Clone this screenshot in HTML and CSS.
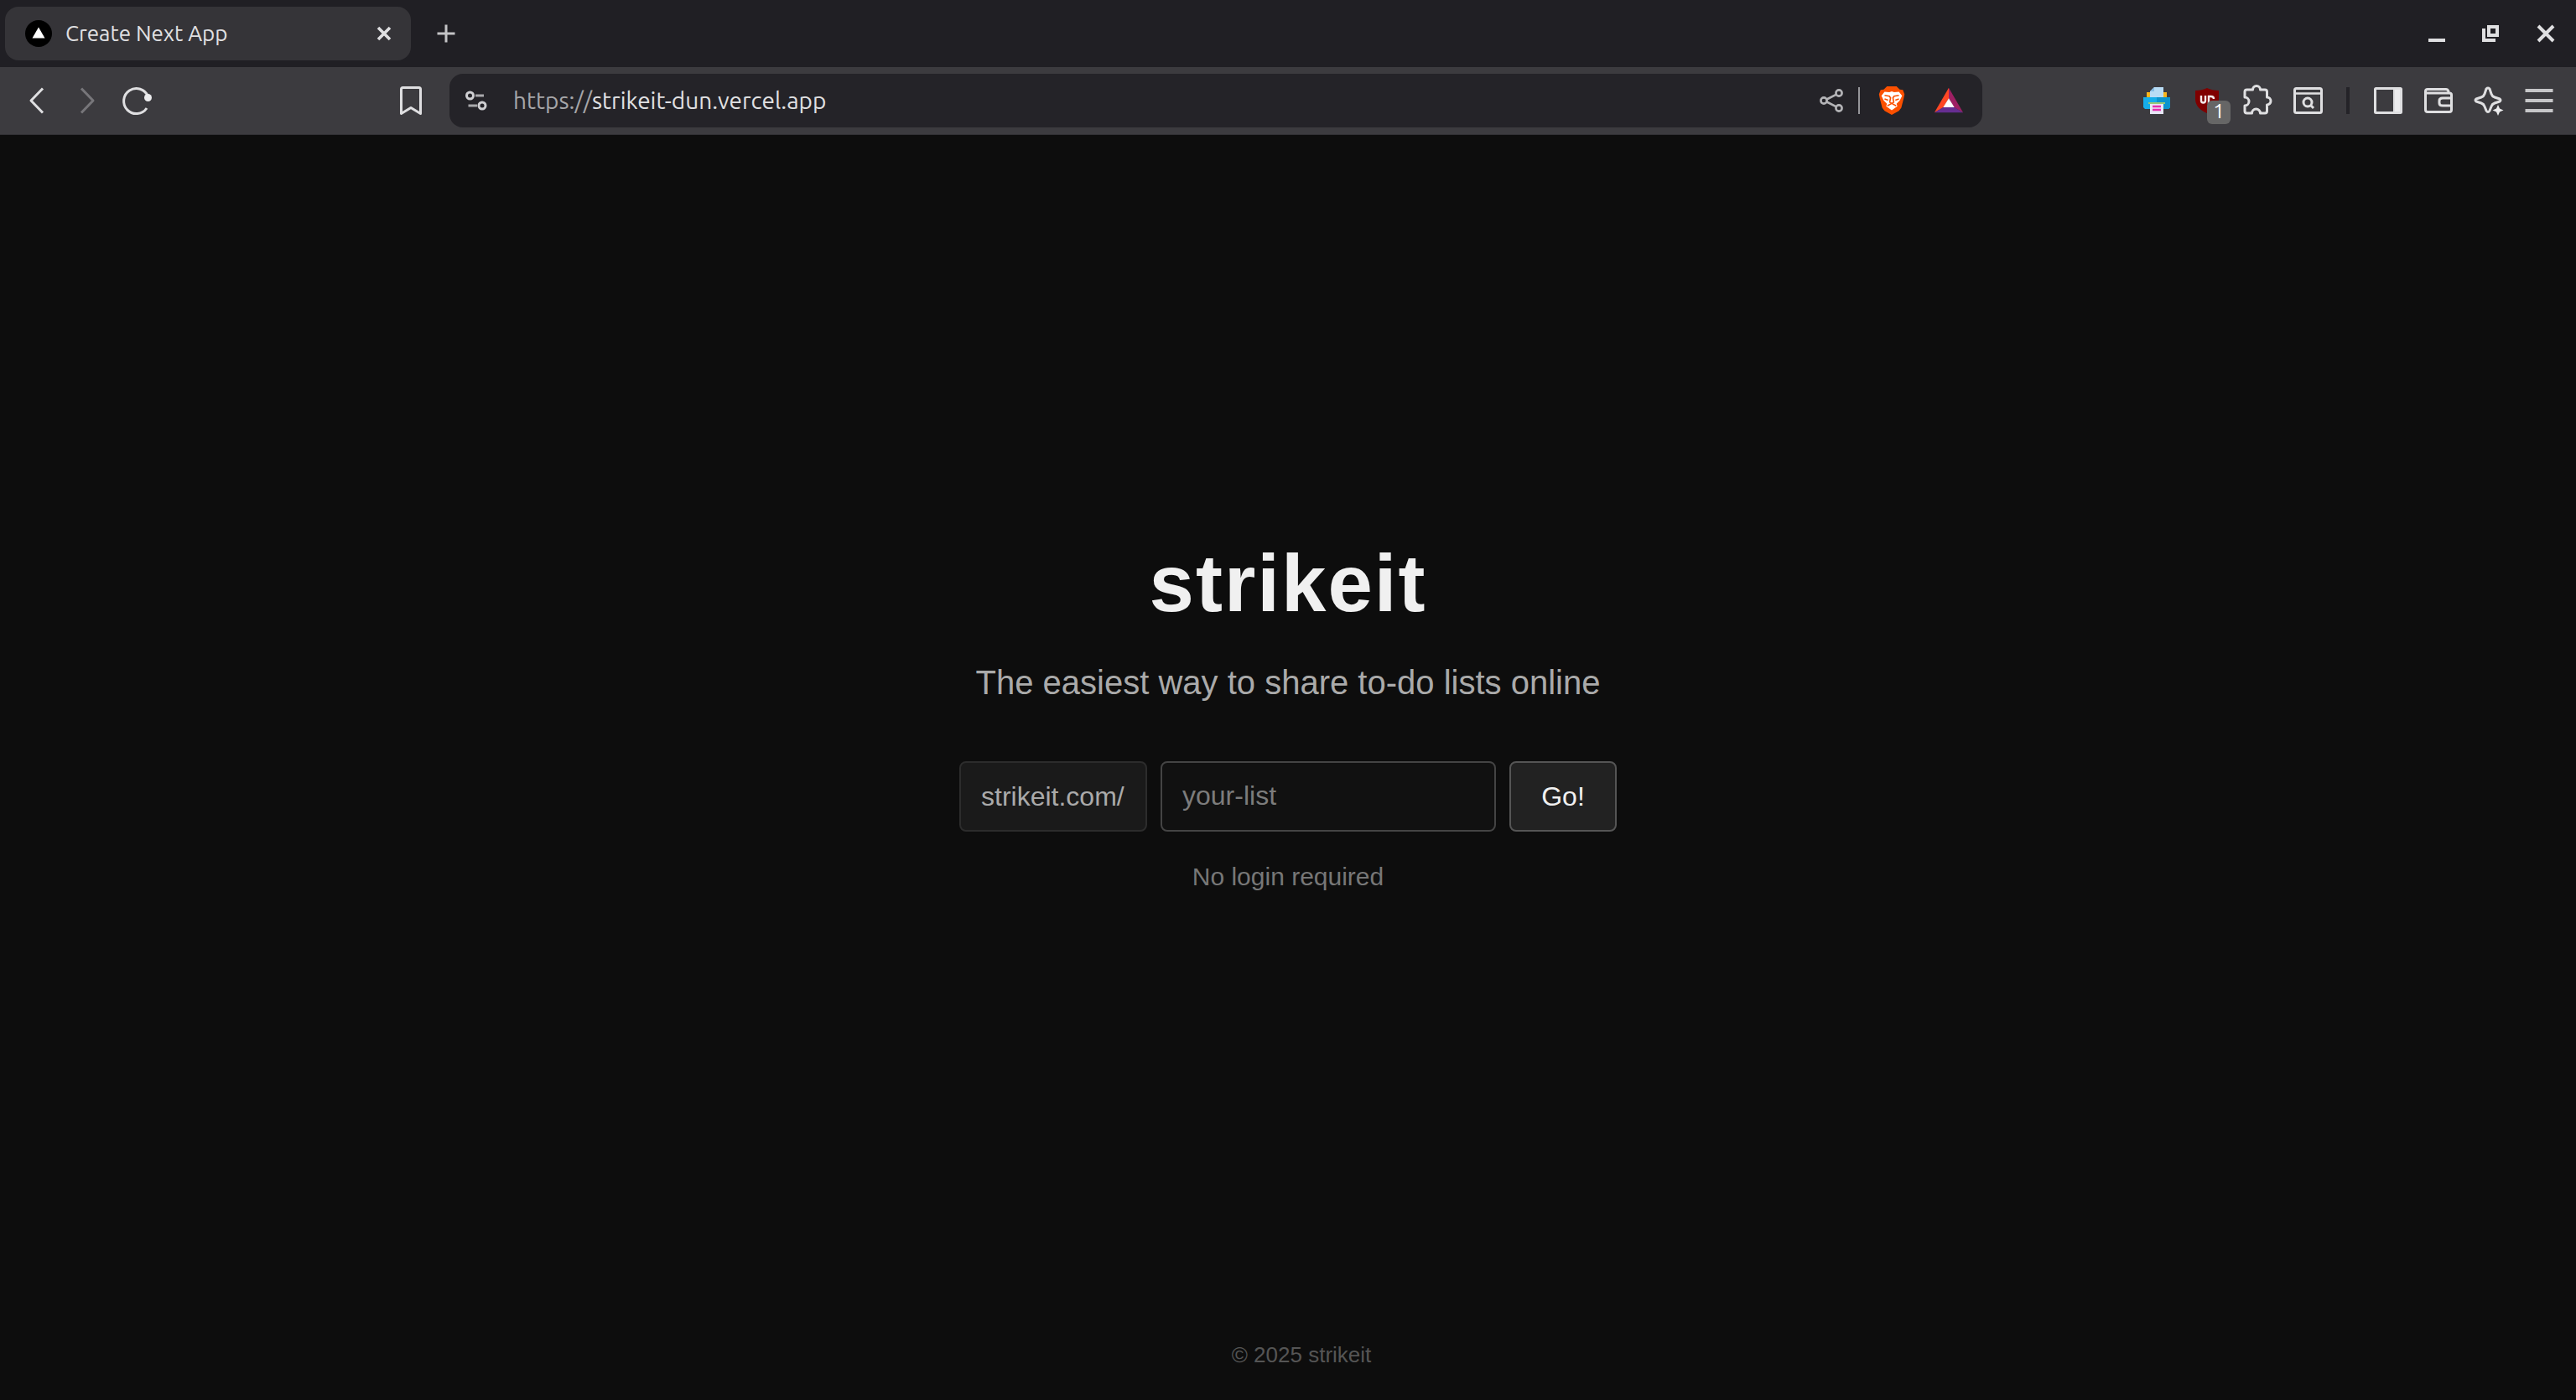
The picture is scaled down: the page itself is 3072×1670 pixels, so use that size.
FILE: index.html
```html
<!DOCTYPE html>
<html lang="en">
<head>
<meta charset="utf-8">
<title>Create Next App</title>
<link rel="stylesheet" href="styles.css">
</head>
<body>
<div class="window">
  <header class="chrome">
    <div class="tabstrip">
      <div class="tab">
        <svg class="favicon" viewBox="0 0 32 32" aria-hidden="true"><circle cx="16" cy="16" r="16" fill="#000"/><path d="M16 8.500L23.500 21.500H8.500Z" fill="#fff"/></svg>
        <span class="tab-title">Create Next App</span>
        <button class="tab-close" aria-label="Close tab"><svg class="icon" viewBox="0 0 40 40"><path d="M13 13L27 27M27 13L13 27" stroke-width="3.600"/></svg></button>
      </div>
      <button class="new-tab" aria-label="New tab"><svg class="icon" viewBox="0 0 40 40"><path d="M20 9.500V30.500M9.500 20H30.500" stroke="#c4c4c6" stroke-width="3"/></svg></button>
      <div class="window-controls">
        <button class="window-button" aria-label="Minimize"><svg class="icon" viewBox="0 0 40 40"><path d="M12 28H32" stroke-width="4"/></svg></button>
        <button class="window-button" aria-label="Restore"><svg class="icon" viewBox="0 0 40 40"><path d="M18 12H28V22H18Z" stroke-width="4"/><path d="M12 14V28H26" stroke-width="4"/></svg></button>
        <button class="window-button" aria-label="Close"><svg class="icon" viewBox="0 0 40 40"><path d="M11 11L29 29M29 11L11 29" stroke-width="4"/></svg></button>
      </div>
    </div>
    <div class="toolbar">
      <nav class="nav">
        <button class="tool" aria-label="Back"><svg class="icon round" viewBox="0 0 40 40"><path d="M27 5.500L13 20L27 34.500" stroke-width="3"/></svg></button>
        <button class="tool" aria-label="Forward" disabled><svg class="icon round" viewBox="0 0 40 40"><path d="M13 5.500L27 20L13 34.500" stroke="#77767a" stroke-width="3"/></svg></button>
        <button class="tool" aria-label="Reload"><svg class="icon round" viewBox="0 0 40 40"><path d="M31 29A15 15 0 1 1 32.500 15" stroke-width="3"/><circle cx="32.500" cy="16.500" r="4.500" fill="#ececee" stroke="none"/></svg></button>
        <button class="tool bookmark" aria-label="Bookmark"><svg class="icon round" viewBox="0 0 40 40"><path d="M10.500 4.500H29.500Q31.500 4.500 31.500 6.500V35.500L20 28.500L8.500 35.500V6.500Q8.500 4.500 10.500 4.500Z" stroke-width="3"/></svg></button>
      </nav>
      <div class="address">
        <button class="site-info" aria-label="Site information"><svg class="icon" viewBox="0 0 40 40"><g stroke="#a9a9ac" stroke-width="3"><circle cx="12.500" cy="14" r="4" stroke="#cfcfd2"/><path d="M19 14H29M10.500 26H21"/><circle cx="27" cy="26" r="4" stroke="#cfcfd2"/></g></svg></button>
        <div class="url"><span class="scheme">https://</span>strikeit-dun.vercel.app</div>
        <button class="tool share" aria-label="Share"><svg class="icon" viewBox="0 0 40 40"><g stroke="#b4b4b7" stroke-width="2.600"><circle cx="9" cy="20" r="3.600"/><circle cx="27" cy="11" r="3.600"/><circle cx="27" cy="29" r="3.600"/><path d="M12.500 18.500L23.500 12.800M12.500 21.500L23.500 27.200"/></g></svg></button>
        <span class="address-divider"></span>
        <button class="tool shield" aria-label="Brave Shields"><svg class="icon fill" viewBox="0 0 40 40"><path d="M14 2H26L30 6L34 6.500L36 12L35 17L32 29L29 33L20 38L11 33L8 29L5 17L4 12L6 6.500L10 6Z" fill="#fb5000"/><path d="M11 9L17 9.500L20 8.500L23 9.500L29 9L33 14L30 20L26 24L27 27L20 32L13 27L14 24L10 20L7 14Z" fill="#fff"/><path d="M11 13.500L17 14.500L18.500 16.500L17.500 22L20 23.500L22.500 22L21.500 16.500L23 14.500L29 13.500M14.500 26.500L20 23.500L25.500 26.500M11 18L15.500 19.500M29 18L24.500 19.500" fill="none" stroke="#fb5000" stroke-width="1.700"/></svg></button>
        <button class="tool rewards" aria-label="Brave Rewards"><svg class="icon fill" viewBox="0 0 40 40"><path d="M20 4L2 35L13.500 28.500L20 17Z" fill="#ff4724"/><path d="M20 4L38 35L26.500 28.500L20 17Z" fill="#9e1f63"/><path d="M2 35H38L27 28.500H13Z" fill="#662d91"/><path d="M20 17L27 28.500H13Z" fill="#fff"/></svg></button>
      </div>
      <div class="actions">
        <button class="tool" aria-label="Print"><svg class="icon fill" viewBox="0 0 40 40"><path d="M8 10H32V18H8Z" fill="#f8b51c"/><path d="M12 17V9L17 4H28V17Z" fill="#b8dcf5"/><path d="M12 9L17 4V9Z" fill="#86bde6"/><path d="M4 16H36V28L34 30H6L4 28Z" fill="#16aeea"/><path d="M20 16H36V28L34 30H20Z" fill="#0a94ce"/><path d="M10 22H30V24H10Z" fill="#96c878"/><path d="M12 24H28V36H12Z" fill="#e7e7f6"/><path d="M15 27H25M15 31H25" stroke="#e62daf" stroke-width="2.400"/></svg></button>
        <button class="tool ublock" aria-label="uBlock Origin, 1 blocked"><svg class="icon fill" viewBox="0 0 40 40"><path d="M20 5Q26 8 34 8V18Q34 29 20 35Q6 29 6 18V8Q14 8 20 5Z" fill="#800000"/><path d="M13 14V20Q13 22.500 15.500 22.500Q18 22.500 18 20V14M22 24V15H24.500Q28 15 28 18" fill="none" stroke="#f4eaea" stroke-width="2.400"/></svg><span class="badge">1</span></button>
        <button class="tool" aria-label="Extensions"><svg class="icon round" viewBox="0 0 40 40"><path d="M5 9.500Q5 7 7.500 7H14.500A4.500 4.500 0 0 1 23.500 7H29Q31.500 7 31.500 9.500V16A4.500 4.500 0 0 1 31.500 25V32.500Q31.500 35 29 35H23.500A5 5 0 0 0 13.500 35H7.500Q5 35 5 32.500V26A5 5 0 0 0 5 16Z" stroke-width="3"/></svg></button>
        <button class="tool" aria-label="Search tabs"><svg class="icon round" viewBox="0 0 40 40"><rect x="4.500" y="5.500" width="32" height="29" rx="2" stroke-width="3"/><path d="M5 11.500H36" stroke-width="2.500"/><circle cx="20" cy="22" r="5" stroke-width="3"/><path d="M24 26L27 29" stroke-width="3"/></svg></button>
        <span class="toolbar-divider"></span>
        <button class="tool" aria-label="Sidebar"><svg class="icon round" viewBox="0 0 40 40"><rect x="4.500" y="5.500" width="31" height="29" rx="1" stroke-width="3"/><path d="M27 6H35V34H27Z" fill="#ececee" stroke-width="2"/></svg></button>
        <button class="tool" aria-label="Wallet"><svg class="icon round" viewBox="0 0 40 40"><path d="M32 10.500V9Q31 6.500 29 6.500H7Q4.500 6.500 4.500 9V31Q4.500 33.500 7 33.500H33Q35.500 33.500 35.500 31V13Q35.500 11 33 11H5" stroke-width="3"/><path d="M35 17H25Q21 17 21 20V23Q21 26 25 26H35" stroke-width="3"/></svg></button>
        <button class="tool" aria-label="Leo AI"><svg class="icon round" viewBox="0 0 40 40"><path d="M17 6Q19 4 21 6L23 12Q24 15 27 16L33 18Q35 19.500 33 21L27 23Q24 24 23 27L21 32Q19 35 17 32L15 27Q14 24 11 23L5 21Q3 19.500 5 18L11 16Q14 15 15 12Z" stroke-width="3"/><path d="M31 25L33 29.500L37.500 31.500L33 33.500L31 38L29 33.500L24.500 31.500L29 29.500Z" fill="#ececee" stroke="#3c3b3f" stroke-width="2" paint-order="stroke"/></svg></button>
        <button class="tool" aria-label="Menu"><svg class="icon" viewBox="0 0 40 40"><path d="M3.500 8H36.500M3.500 20H36.500M3.500 32H36.500" stroke="#c6c6c8" stroke-width="4"/></svg></button>
      </div>
    </div>
  </header>

  <main class="hero">
    <h1 class="title">strikeit</h1>
    <p class="tagline">The easiest way to share to-do lists online</p>
    <form class="list-form">
      <label class="prefix" for="list-name">strikeit.com/</label>
      <input class="list-input" id="list-name" type="text" placeholder="your-list">
      <button class="go" type="submit">Go!</button>
    </form>
    <p class="note">No login required</p>
  </main>
  <footer class="footer">© 2025 strikeit</footer>
</div>
</body>
</html>
```
FILE: styles.css
```css
* {
  box-sizing: border-box;
}

body {
  margin: 0;
  background: #0d0d0d;
  color: #f0f0f0;
  font-family: "Liberation Sans", Arial, sans-serif;
}

h1,
p {
  margin: 0;
}

button {
  margin: 0;
  padding: 0;
  border: 0;
  background: none;
  color: inherit;
  font: inherit;
}

.window {
  display: flex;
  flex-direction: column;
  min-height: 100vh;
}

/* Browser chrome */

.chrome {
  color: #e0e0e2;
  font-family: Ubuntu, "Noto Sans", sans-serif;
}

.tabstrip {
  display: flex;
  align-items: center;
  height: 80px;
  padding: 0 6px;
  background: #201f24;
}

.tab {
  display: flex;
  align-items: center;
  gap: 16px;
  width: 484px;
  height: 64px;
  padding: 0 12px 0 24px;
  border-radius: 16px;
  background: #353438;
}

.favicon {
  width: 32px;
  height: 32px;
}

.tab-title {
  flex: 1;
  font-size: 26px;
  line-height: 32px;
}

.icon {
  display: block;
  width: 40px;
  height: 40px;
  fill: none;
  stroke: #dfdfe1;
}

.icon.fill {
  stroke: none;
}

.icon.round {
  stroke-linejoin: round;
}

.new-tab {
  margin-left: 22px;
}

.window-controls {
  display: flex;
  gap: 26px;
  margin-left: auto;
  padding-right: 10px;
}

.toolbar {
  display: flex;
  align-items: center;
  height: 81px;
  padding: 0 14px;
  border-bottom: 1px solid #323135;
  background: #3c3b3f;
}

.nav {
  display: flex;
  width: 522px;
  padding-right: 16px;
}

.tool {
  display: flex;
  align-items: center;
  justify-content: center;
  width: 60px;
  height: 64px;
}

.bookmark {
  margin-left: auto;
}

.address {
  display: flex;
  flex: 1;
  align-items: center;
  height: 64px;
  padding: 0 10px 0 12px;
  border-radius: 16px;
  background: #242328;
}

.url {
  flex: 1;
  padding-left: 24px;
  font-size: 28px;
  line-height: 40px;
}

.scheme {
  color: #a6a6a9;
}

.address-divider {
  width: 2px;
  height: 32px;
  background: #96969a;
}

.shield {
  margin-left: 8px;
}

.rewards {
  margin-left: 8px;
}

.shield .icon,
.rewards .icon {
  width: 38px;
  height: 38px;
}

.actions {
  display: flex;
  align-items: center;
  justify-content: flex-end;
  width: 694px;
}

.ublock {
  position: relative;
}

.badge {
  position: absolute;
  top: 32px;
  left: 30px;
  width: 28px;
  height: 28px;
  border-radius: 6px;
  background: #666;
  color: #fff;
  font-size: 24px;
  line-height: 26px;
}

.toolbar-divider {
  width: 4px;
  height: 32px;
  margin: 0 16px;
  background: #242328;
}

/* Page */

.hero {
  display: flex;
  flex: 1;
  flex-direction: column;
  align-items: center;
  justify-content: center;
}

.title {
  margin-bottom: 38px;
  font-size: 96px;
  font-weight: 700;
  letter-spacing: 2px;
  line-height: 112px;
}

.tagline {
  margin-bottom: 70px;
  color: #aaa;
  font-size: 40px;
  line-height: 48px;
}

.list-form {
  display: flex;
  gap: 16px;
  margin-bottom: 36px;
  font-size: 32px;
  line-height: 40px;
}

.prefix,
.list-input,
.go {
  height: 84px;
  border: 2px solid;
  border-radius: 8px;
}

.prefix {
  min-width: 224px;
  padding: 20px 24px;
  border-color: #2c2c2c;
  background: #1a1a1a;
  color: #aaa;
}

.list-input {
  width: 400px;
  padding: 0 24px;
  border-color: #444;
  background: #111;
  color: #f0f0f0;
  font: inherit;
}

.list-input::placeholder {
  color: #7c7c7c;
}

.go {
  min-width: 128px;
  border-color: #555;
  background: #222;
}

.note {
  color: #777;
  font-size: 30px;
  line-height: 36px;
}

.footer {
  padding: 58px 0 38px 32px;
  color: #555;
  font-size: 26px;
  line-height: 32px;
  text-align: center;
}
```
